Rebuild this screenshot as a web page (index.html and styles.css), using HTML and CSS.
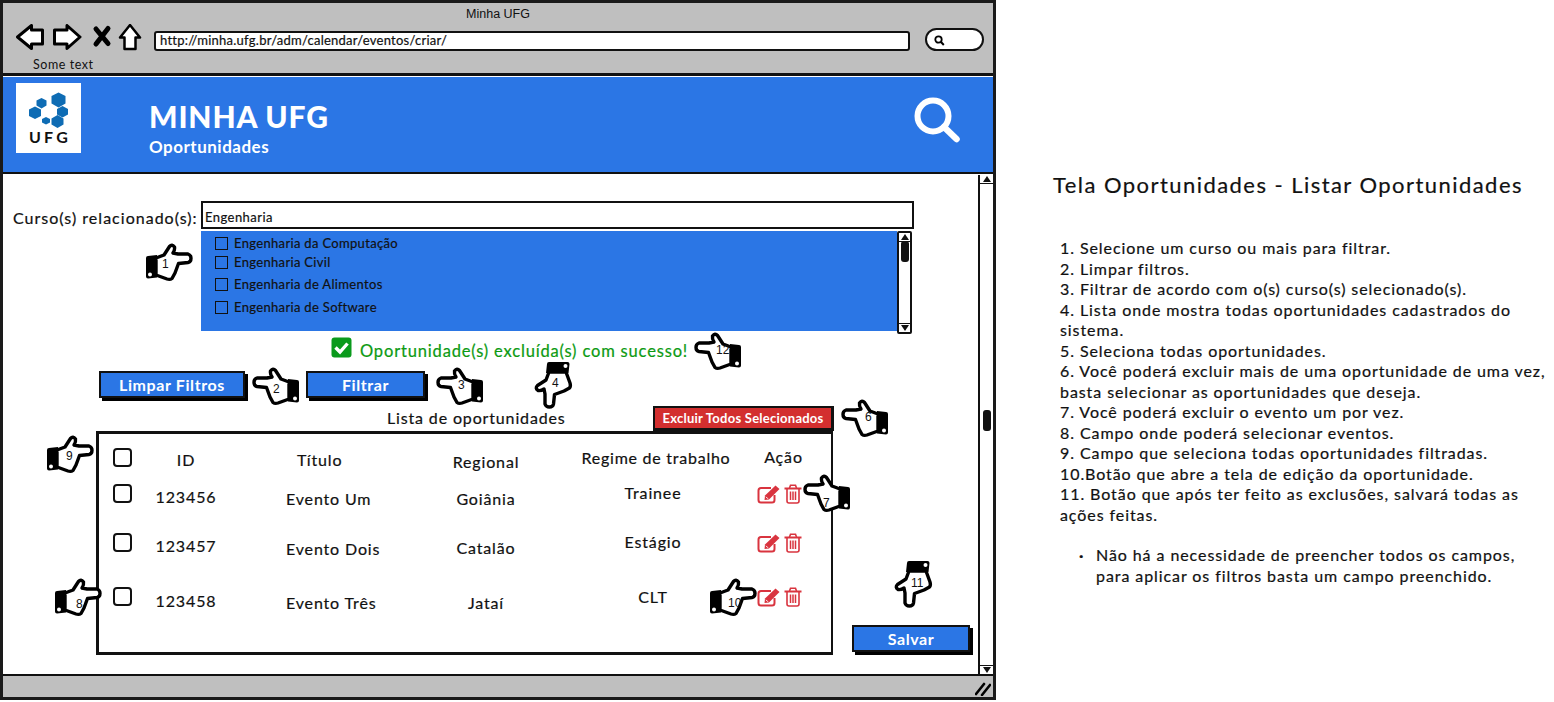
FILE: index.html
```html
<!DOCTYPE html>
<html lang="pt-BR">
<head>
<meta charset="utf-8">
<title>Minha UFG</title>
<link rel="stylesheet" href="styles.css">
</head>
<body>
<svg class="defs" width="0" height="0" aria-hidden="true">
  <symbol id="hand" viewBox="0 0 48 40">
    <path d="M11 16 L19 13 L24.500 4.500 Q27 1.800 29.500 5 Q30 8 28 11 L33 12 L43 12 Q46 13 46 16.300 Q46 20 43 20.500 L33.500 21.500 L30 31 L27 36.500 Q25 38 22 37 L11 33 Z" fill="#fff" stroke="#000" stroke-width="3.400" stroke-linejoin="round"/>
    <path d="M3 14 L12 13 L12 35.500 L3 36.500 Q1 36.500 1 34.500 L1 16 Q1 14 3 14 Z" fill="#000"/>
    <circle cx="5" cy="32.500" r="2" fill="#fff"/>
  </symbol>
  <symbol id="edit" viewBox="0 0 24 20">
    <path d="M17.500 11 V16 Q17.500 18.500 15 18.500 H4 Q1.500 18.500 1.500 16 V6.500 Q1.500 4 4 4 H14" fill="none" stroke="currentColor" stroke-width="2"/>
    <path d="M8 11.500 L18.500 1.500 L22.500 5 L12 15.500 L7.500 16 Z" fill="currentColor"/>
    <path d="M9 12.800 L11 14.800" stroke="#fff" stroke-width="1"/>
  </symbol>
  <symbol id="trash" viewBox="0 0 18 20">
    <path d="M3 5 V17 Q3 19 5 19 H13 Q15 19 15 17 V5" fill="none" stroke="currentColor" stroke-width="1.600"/>
    <path d="M.500 4.500 H17.500" stroke="currentColor" stroke-width="2"/>
    <path d="M5.500 4 L6.500 1.200 H11.500 L12.500 4" fill="none" stroke="currentColor" stroke-width="1.600"/>
    <path d="M6.500 7.500 V16 M9 7.500 V16 M11.500 7.500 V16" stroke="currentColor" stroke-width="1.500"/>
  </symbol>
</svg>

<main class="page">
  <section class="browser">
    <header class="chrome">
      <div class="chrome-title">Minha UFG</div>
      <div class="toolbar">
        <svg class="nav-icons" width="128" height="28" viewBox="16 24 128 28" aria-hidden="true">
          <path d="M17.500 37 L31.500 25.500 V30 H42.500 V44 H31.500 V48.500 Z" fill="#fff" stroke="#000" stroke-width="3" stroke-linejoin="round"/>
          <path d="M80 37 L67 25.500 V30 H54.500 V44 H67 V48.500 Z" fill="#fff" stroke="#000" stroke-width="3" stroke-linejoin="round"/>
          <path d="M96 29 L108 43.500 M108 28.500 L96 44" stroke="#000" stroke-width="5" stroke-linecap="round"/>
          <path d="M130 25 L140 37.500 H135.500 V49 H124.500 V37.500 H120 Z" fill="#fff" stroke="#000" stroke-width="2.500" stroke-linejoin="round"/>
        </svg>
        <div class="url">http://minha.ufg.br/adm/calendar/eventos/criar/</div>
        <div class="search-pill">
          <svg width="11" height="11" viewBox="0 0 11 11" aria-hidden="true"><circle cx="4.500" cy="4.500" r="3.200" fill="none" stroke="#000" stroke-width="1.800"/><path d="M7 7 L9.800 10" stroke="#000" stroke-width="2"/></svg>
        </div>
      </div>
      <div class="chrome-status">Some text</div>
    </header>

    <header class="site-header">
      <div class="logo">
        <svg width="65" height="46" viewBox="16 83 65 46" aria-hidden="true">
          <polygon points="58.500,92.500 65.500,96 65.500,103.500 58.500,107.500 51.500,103.500 51.500,96" fill="#0e6cb4"/>
          <polygon points="41.500,98 46.500,100.500 46.500,105.500 41.500,108.500 36.500,105.500 36.500,100.500" fill="#0e6cb4"/>
          <polygon points="35,106.500 41,109.500 41,116 35,119 29,116 29,109.500" fill="#0e6cb4"/>
          <polygon points="62.500,106 68,109 68,114.500 62.500,117.500 57,114.500 57,109" fill="#0e6cb4"/>
          <polygon points="46,117 50,119 50,122.500 46,124.500 42,122.500 42,119" fill="#0e6cb4"/>
          <polygon points="57.500,115 63.500,118.500 63.500,124.500 57.500,128 51.500,124.500 51.500,118.500" fill="#0e6cb4"/>
        </svg>
        <div class="logo-text">UFG</div>
      </div>
      <div class="brand">
        <h1 class="brand-title">MINHA UFG</h1>
        <div class="brand-sub">Oportunidades</div>
      </div>
      <svg class="site-search" width="46" height="46" viewBox="0 0 46 46" aria-hidden="true"><circle cx="19" cy="19" r="15.500" fill="none" stroke="#fff" stroke-width="6"/><path d="M30 30 L42.500 42" stroke="#fff" stroke-width="6.500" stroke-linecap="round"/></svg>
    </header>

    <div class="viewport">
      <div class="content">
        <div class="course-row">
          <label class="course-label">Curso(s) relacionado(s):</label>
          <div class="course-field">
            <div class="course-input">Engenharia</div>
            <div class="course-list">
              <ul class="course-options">
                <li class="course-option opt-1"><span class="mini-check"></span>Engenharia da Computação</li>
                <li class="course-option opt-2"><span class="mini-check"></span>Engenharia Civil</li>
                <li class="course-option opt-3"><span class="mini-check"></span>Engenharia de Alimentos</li>
                <li class="course-option opt-4"><span class="mini-check"></span>Engenharia de Software</li>
              </ul>
              <div class="mini-scroll">
                <span class="arrow-box box-top"><span class="tri-up"></span></span>
                <span class="mini-thumb"></span>
                <span class="arrow-box box-bottom"><span class="tri-down"></span></span>
              </div>
            </div>
          </div>
        </div>

        <div class="success">
          <svg width="21" height="21" viewBox="0 0 21 21" aria-hidden="true"><rect x=".5" y=".5" width="20" height="20" rx="3" fill="#0a9a1c"/><path d="M4.500 10.500 L9 15 L16.500 6.500" fill="none" stroke="#fff" stroke-width="3.400"/></svg>
          <span class="success-text">Oportunidade(s) excluída(s) com sucesso!</span>
        </div>

        <div class="filter-actions">
          <button class="btn btn-clear">Limpar Filtros</button>
          <button class="btn btn-filter">Filtrar</button>
        </div>

        <div class="list-head">
          <div class="list-title">Lista de oportunidades</div>
          <button class="btn-danger">Excluir Todos Selecionados</button>
        </div>

        <div class="list-area">
          <div class="table">
            <span class="box t14"></span><span class="cell c-id t16 pl">ID</span><span class="cell c-title t16 head-title">Título</span><span class="cell c-reg t18">Regional</span><span class="cell c-regime t14 head-regime">Regime de trabalho</span><span class="cell c-act t13">Ação</span>

            <span class="box t6"></span><span class="cell c-id t9">123456</span><span class="cell c-title t11">Evento Um</span><span class="cell c-reg t11">Goiânia</span><span class="cell c-regime t5">Trainee</span><span class="icons t6"><svg class="i-edit"><use href="#edit"/></svg><svg class="i-trash"><use href="#trash"/></svg></span>

            <span class="box t9"></span><span class="cell c-id t12">123457</span><span class="cell c-title t15">Evento Dois</span><span class="cell c-reg t14">Catalão</span><span class="cell c-regime t8">Estágio</span><span class="icons t9"><svg class="i-edit"><use href="#edit"/></svg><svg class="i-trash"><use href="#trash"/></svg></span>

            <span class="box t9"></span><span class="cell c-id t13">123458</span><span class="cell c-title t15">Evento Três</span><span class="cell c-reg t15">Jataí</span><span class="cell c-regime t9">CLT</span><span class="icons t9"><svg class="i-edit"><use href="#edit"/></svg><svg class="i-trash"><use href="#trash"/></svg></span>
          </div>
          <button class="btn btn-save">Salvar</button>
        </div>
      </div>

      <div class="page-scroll">
        <span class="arrow-box box-top"><span class="tri-up"></span></span>
        <span class="page-thumb"></span>
        <span class="arrow-box box-bottom"><span class="tri-down"></span></span>
      </div>
    </div>

    <footer class="status-bar">
      <svg width="16" height="14" viewBox="0 0 16 14" aria-hidden="true"><path d="M1 12 L9 2 M7 13 L15 3" stroke="#000" stroke-width="2.600" stroke-linecap="round"/></svg>
    </footer>
  </section>

  <aside class="notes">
    <h2 class="notes-title">Tela Oportunidades - Listar Oportunidades</h2>
    <ol class="notes-list">
      <li>1. Selecione um curso ou mais para filtrar.</li>
      <li>2. Limpar filtros.</li>
      <li>3. Filtrar de acordo com o(s) curso(s) selecionado(s).</li>
      <li>4. Lista onde mostra todas oportunidades cadastrados do sistema.</li>
      <li>5. Seleciona todas oportunidades.</li>
      <li>6. Você poderá excluir mais de uma oportunidade de uma vez, basta selecionar as oportunidades que deseja.</li>
      <li>7. Você poderá excluir o evento um por vez.</li>
      <li>8. Campo onde poderá selecionar eventos.</li>
      <li>9. Campo que seleciona todas oportunidades filtradas.</li>
      <li>10.Botão que abre a tela de edição da oportunidade.</li>
      <li>11. Botão que após ter feito as exclusões, salvará todas as ações feitas.</li>
    </ol>
    <ul class="notes-bullets">
      <li>Não há a necessidade de preencher todos os campos, para aplicar os filtros basta um campo preenchido.</li>
    </ul>
  </aside>

  <div class="hand hand-1 right"><svg><use href="#hand"/></svg><b>1</b></div>
  <div class="hand hand-2 left"><svg><use href="#hand"/></svg><b>2</b></div>
  <div class="hand hand-3 left"><svg><use href="#hand"/></svg><b>3</b></div>
  <div class="hand hand-4 down"><svg><use href="#hand"/></svg><b>4</b></div>
  <div class="hand hand-6 left"><svg><use href="#hand"/></svg><b>6</b></div>
  <div class="hand hand-7 left"><svg><use href="#hand"/></svg><b>7</b></div>
  <div class="hand hand-8 right"><svg><use href="#hand"/></svg><b>8</b></div>
  <div class="hand hand-9 right"><svg><use href="#hand"/></svg><b>9</b></div>
  <div class="hand hand-10 right"><svg><use href="#hand"/></svg><b>10</b></div>
  <div class="hand hand-11 down"><svg><use href="#hand"/></svg><b>11</b></div>
  <div class="hand hand-12 left"><svg><use href="#hand"/></svg><b>12</b></div>
</main>
</body>
</html>
```

FILE: styles.css
```css
* { box-sizing: border-box; }

html, body { margin: 0; padding: 0; background: #fff; }

body {
  font-family: "Lato", "Open Sans", sans-serif;
  color: #111;
  overflow: hidden;
}

.defs { position: absolute; }

.page {
  position: relative;
  display: flex;
  width: 1554px;
  height: 702px;
}

/* browser window */
.browser {
  display: flex;
  flex-direction: column;
  width: 996px;
  height: 700px;
  border: 3px solid #1a1a1a;
  background: #fff;
  flex: none;
}

.chrome {
  height: 73px;
  background: #bfbfbf;
  border-bottom: 3px solid #111;
  flex: none;
}

.chrome-title {
  height: 22px;
  padding-top: 3px;
  text-align: center;
  font: 12.500px/16px "Liberation Sans", sans-serif;
}

.toolbar {
  display: flex;
  align-items: flex-start;
  height: 29px;
  padding-left: 13px;
}

.nav-icons { flex: none; margin-top: -1px; }

.url {
  flex: none;
  width: 756px;
  height: 20px;
  margin: 6px 0 0 10px;
  padding-left: 4px;
  background: #fff;
  border: 2px solid #111;
  border-radius: 3px;
  font-size: 13px;
  line-height: 15px;
  letter-spacing: .25px;
  -webkit-text-stroke: .2px #111;
}

.search-pill {
  flex: none;
  width: 59px;
  height: 23px;
  margin: 3px 0 0 15px;
  padding: 5px 0 0 7px;
  background: #fff;
  border: 2px solid #111;
  border-radius: 12px;
  line-height: 0;
}

.chrome-status {
  padding: 3px 0 0 30px;
  font-size: 12.500px;
  line-height: 15px;
  letter-spacing: .55px;
}

.site-header {
  display: flex;
  height: 98px;
  background: #2b76e5;
  border-top: 1px solid #fff;
  border-bottom: 2px solid #111;
  padding: 6px 33px 0 13px;
  flex: none;
}

.logo {
  width: 65px;
  height: 70px;
  background: #fff;
  flex: none;
}

.logo svg { display: block; }

.logo-text {
  text-align: center;
  font: 700 16px/20px "Lato", sans-serif;
  letter-spacing: 3.200px;
  padding-left: 3px;
  margin-top: -2px;
}

.brand { margin-left: 68px; color: #fff; flex: 1; }

.brand-title {
  margin: 15px 0 0;
  font-size: 30px;
  line-height: 36px;
  font-weight: 900;
  letter-spacing: .85px;
}

.brand-sub {
  margin-top: 2px;
  font-size: 17px;
  line-height: 22px;
  font-weight: 700;
  letter-spacing: .5px;
}

.site-search { margin-top: 14px; flex: none; }

.viewport {
  display: flex;
  flex: 1;
  min-height: 0;
}

.content {
  flex: 1;
  min-width: 0;
  font-size: 16px;
  letter-spacing: .85px;
  -webkit-text-stroke: .2px currentColor;
}

/* filter */
.course-row {
  display: flex;
  padding: 27px 0 0 10px;
}

.course-label {
  width: 188px;
  flex: none;
  padding-top: 6px;
  line-height: 22px;
  letter-spacing: 1.020px;
}

.course-input {
  width: 713px;
  height: 28px;
  padding: 6px 0 0 2px;
  border: 2px solid #111;
  font-size: 13px;
  line-height: 17px;
  letter-spacing: .45px;
}

.course-list {
  display: flex;
  justify-content: space-between;
  width: 711px;
  height: 103px;
  margin-top: 2px;
}

.course-options {
  flex: 1;
  height: 100px;
  margin: 0;
  padding: 0 0 0 14px;
  background: #2b76e5;
  list-style: none;
  font-size: 13px;
  letter-spacing: .33px;
}

.course-option {
  display: flex;
  align-items: center;
  gap: 6px;
  height: 18px;
  line-height: 18px;
}

.opt-1 { margin-top: 3px; }
.opt-2 { margin-top: 1px; }
.opt-3 { margin-top: 4px; }
.opt-4 { margin-top: 5px; }

.mini-check {
  width: 13px;
  height: 13px;
  border: 1.500px solid #111;
  flex: none;
}

.mini-scroll,
.page-scroll {
  display: flex;
  flex-direction: column;
  align-items: center;
  justify-content: space-between;
  background: #fff;
  flex: none;
}

.mini-scroll {
  width: 15px;
  border: 2px solid #111;
  border-radius: 2px;
}

.arrow-box {
  display: flex;
  justify-content: center;
  align-items: center;
  width: 100%;
  height: 9px;
  flex: none;
}

.box-top { border-bottom: 1.500px solid #111; }
.box-bottom { border-top: 1.500px solid #111; }

.tri-up,
.tri-down {
  width: 0;
  height: 0;
  border-left: 4.500px solid transparent;
  border-right: 4.500px solid transparent;
}

.tri-up { border-bottom: 6px solid #111; }
.tri-down { border-top: 6px solid #111; }

.mini-thumb {
  width: 8px;
  height: 21px;
  margin: -1px 0 auto;
  background: #111;
  border-radius: 3px;
}

/* success */
.success {
  display: flex;
  align-items: center;
  gap: 8px;
  height: 21px;
  margin: 3px 0 0 328px;
  color: #0c9a12;
  font-size: 16.500px;
  letter-spacing: .83px;
}

.success-text { margin-top: 6px; }

/* buttons */
.btn {
  height: 27px;
  padding: 0;
  color: #fff;
  background: #2b76e5;
  border: 2px solid #111;
  box-shadow: 3px 3px 0 #000;
  font: 700 16px/22px "Lato", sans-serif;
  letter-spacing: .6px;
  -webkit-text-stroke: 0;
}

.filter-actions {
  display: flex;
  gap: 61px;
  margin: 13px 0 0 96px;
}

.btn-clear { width: 146px; }
.btn-filter { width: 119px; }

.list-head {
  display: flex;
  align-items: flex-start;
  height: 25px;
  margin-top: 8px;
  padding-left: 384px;
}

.list-title {
  width: 266px;
  padding-top: 1px;
  line-height: 22px;
  letter-spacing: .85px;
}

.btn-danger {
  width: 181px;
  height: 25px;
  padding: 0;
  color: #fff;
  background: #d32f2f;
  border: 2px solid #111;
  border-width: 2px 3px 3px 2px;
  font: 700 13px/18px "Lato", sans-serif;
  letter-spacing: .25px;
  -webkit-text-stroke: 0;
}

/* list */
.list-area {
  display: flex;
  align-items: flex-start;
  gap: 19px;
  padding-left: 93px;
}

.table {
  display: grid;
  grid-template-columns: 51px 72px 198px 132px 202px 76px;
  grid-template-rows: 44px 46px 54px 47px;
  width: 737px;
  height: 224px;
  border: 3px solid #111;
  border-width: 3px 2px 3px 3px;
  flex: none;
}

.box {
  width: 19px;
  height: 19px;
  margin-left: 14px;
  border: 2px solid #111;
  border-radius: 4px;
  align-self: start;
}

.cell {
  align-self: start;
  line-height: 20px;
  white-space: nowrap;
}

.c-id, .c-reg, .c-regime, .c-act { text-align: center; }
.c-title { padding-left: 64px; }
.head-title { padding-left: 75px; }
.head-regime { padding-left: 6px; letter-spacing: .75px; }
.c-act { width: 53px; margin-left: 3px; }

.icons {
  display: flex;
  gap: 3px;
  align-self: start;
  margin-left: 3px;
  color: #d9343f;
}

.i-edit { width: 24px; height: 20px; }
.i-trash { width: 18px; height: 20px; }

.t5 { margin-top: 5px; }
.t6 { margin-top: 6px; }
.t8 { margin-top: 8px; }
.t9 { margin-top: 9px; }
.t11 { margin-top: 11px; }
.t12 { margin-top: 12px; }
.t13 { margin-top: 13px; }
.t14 { margin-top: 14px; }
.t15 { margin-top: 15px; }
.t16 { margin-top: 16px; }
.t18 { margin-top: 18px; }

.btn-save {
  width: 118px;
  margin-top: 194px;
  flex: none;
}

/* page scrollbar */
.page-scroll {
  width: 15px;
  margin: 1px 0 0;
  border-left: 2px solid #111;
}

.page-thumb {
  width: 8px;
  height: 21px;
  margin: 226px 0 auto;
  background: #111;
  border-radius: 3px;
}

.status-bar {
  display: flex;
  justify-content: flex-end;
  align-items: flex-end;
  height: 23px;
  padding: 0 2px 1px 0;
  background: #bfbfbf;
  border-top: 2px solid #111;
  flex: none;
}

/* notes */
.notes {
  flex: none;
  width: 500px;
  padding: 170px 0 0 57px;
  font-size: 16px;
  letter-spacing: .92px;
  -webkit-text-stroke: .2px #111;
}

.notes-title {
  margin: 0;
  font-size: 22px;
  line-height: 30px;
  font-weight: 400;
  letter-spacing: 1.450px;
  white-space: nowrap;
}

.notes-list,
.notes-bullets {
  margin: 0;
  padding: 0;
  list-style: none;
}

.notes-list {
  margin-top: 38px;
  padding-left: 7px;
  width: 497px;
  line-height: 20.500px;
}

.notes-bullets {
  margin-top: 20px;
  padding-left: 43px;
  width: 480px;
  line-height: 20.500px;
}

.notes-bullets li { position: relative; }

.notes-bullets li::before {
  content: "·";
  position: absolute;
  left: -17px;
  font-weight: 700;
}

/* annotation hands */
.hand {
  position: absolute;
  width: 48px;
  height: 40px;
}

.hand svg {
  display: block;
  width: 48px;
  height: 40px;
  overflow: visible;
}

.hand b {
  position: absolute;
  font: 400 12px/14px "Liberation Sans", sans-serif;
  color: #111;
}

.hand.left svg { transform: scaleX(-1); }
.hand.down { width: 40px; height: 48px; }
.hand.down svg { margin: 4px 0 0 -4px; transform: rotate(90deg) scaleY(-1); }

.hand-1 { left: 145px; top: 242px; }
.hand-1 b { left: 17px; top: 15px; }
.hand-2 { left: 252px; top: 366px; }
.hand-2 b { left: 21px; top: 16px; }
.hand-3 { left: 436px; top: 366px; }
.hand-3 b { left: 22px; top: 12px; }
.hand-4 { left: 533px; top: 361px; }
.hand-4 b { left: 19px; top: 15px; }
.hand-6 { left: 841px; top: 398px; }
.hand-6 b { left: 24px; top: 12px; }
.hand-7 { left: 803px; top: 473px; }
.hand-7 b { left: 20px; top: 23px; }
.hand-8 { left: 54px; top: 577px; }
.hand-8 b { left: 22px; top: 20px; }
.hand-9 { left: 46px; top: 434px; }
.hand-9 b { left: 20px; top: 15px; }
.hand-10 { left: 709px; top: 577px; }
.hand-10 b { left: 19px; top: 19px; }
.hand-11 { left: 893px; top: 560px; }
.hand-11 b { left: 18px; top: 16px; }
.hand-12 { left: 694px; top: 331px; }
.hand-12 b { left: 22px; top: 12px; }
```
